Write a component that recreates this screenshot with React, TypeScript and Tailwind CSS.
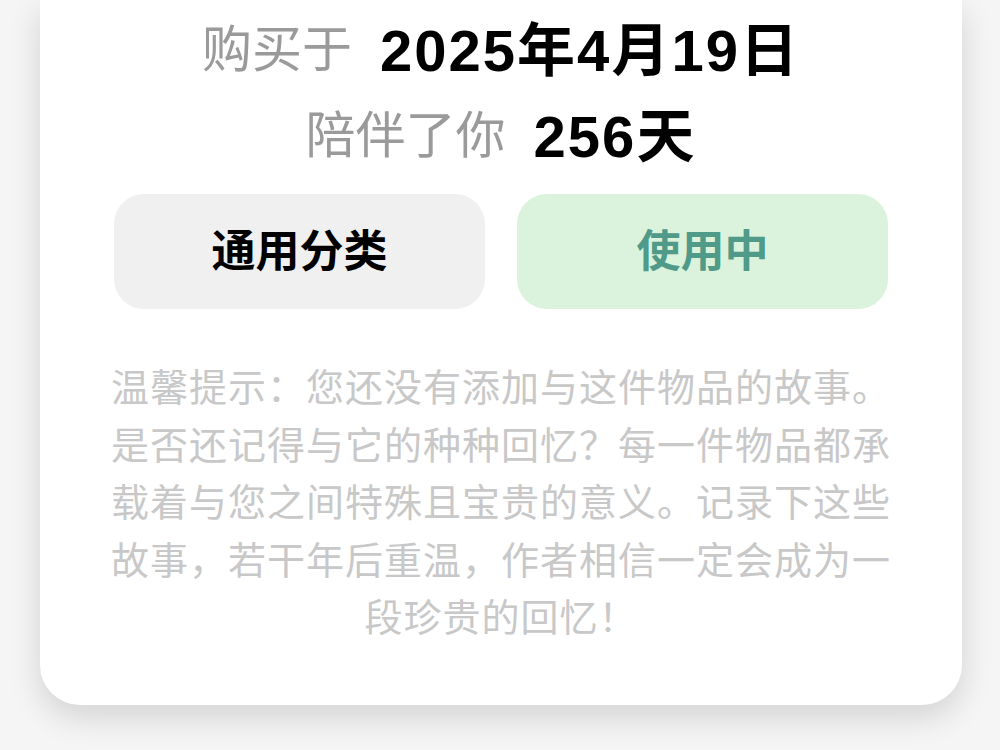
export default function App() {
  const font = { fontFamily: '"Liberation Sans", "Noto Sans CJK SC", sans-serif' };
  return (
    <div className="min-h-[750px] w-[1000px] bg-[#f5f5f5]" style={font}>
      <div className="ml-[40px] w-[922px] rounded-b-[40px] bg-white pb-[57px] pt-[7px] shadow-[0_12px_32px_rgba(0,0,0,0.14)]">
        <div className="flex h-[86px] items-center justify-center gap-[28px]">
          <span className="text-[50px] text-[#9a9a9a]">购买于</span>
          <span className="text-[58px] font-bold tracking-[2px] text-black">2025年4月19日</span>
        </div>
        <div className="flex h-[86px] items-center justify-center gap-[28px]">
          <span className="text-[50px] text-[#9a9a9a]">陪伴了你</span>
          <span className="text-[58px] font-bold tracking-[2px] text-black">256天</span>
        </div>
        <div className="mx-auto mt-[15px] grid w-[774px] grid-cols-2 gap-[32px]">
          <div className="flex h-[115px] items-center justify-center rounded-[30px] bg-[#f0f0f0] text-[44px] font-semibold text-black">
            通用分类
          </div>
          <div className="flex h-[115px] items-center justify-center rounded-[30px] bg-[#dbf2dc] text-[44px] font-semibold text-[#4f9a89]">
            使用中
          </div>
        </div>
        <p className="mx-auto mt-[51px] w-[790px] text-center text-[38px] leading-[57.5px] tracking-[1px] text-[#c8c8c8]">
          温馨提示：您还没有添加与这件物品的故事。是否还记得与它的种种回忆？每一件物品都承载着与您之间特殊且宝贵的意义。记录下这些故事，若干年后重温，作者相信一定会成为一段珍贵的回忆！
        </p>
      </div>
    </div>
  );
}
